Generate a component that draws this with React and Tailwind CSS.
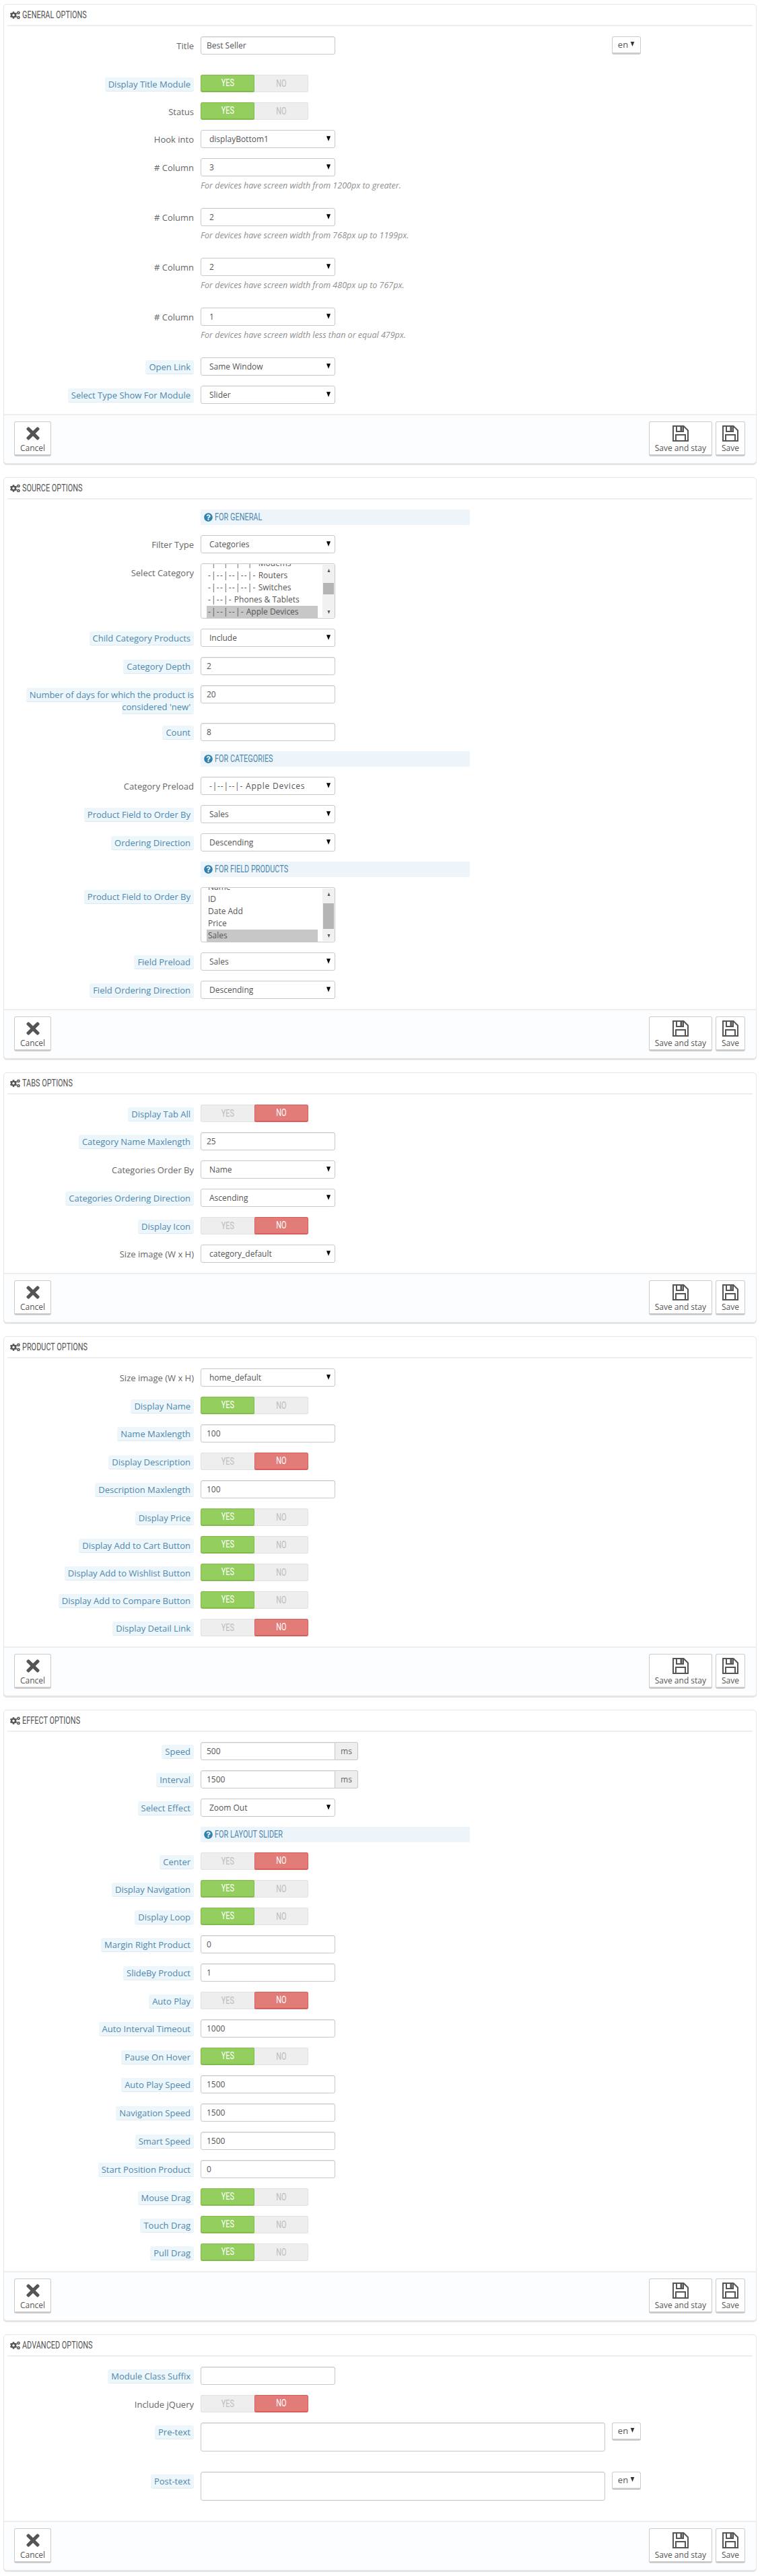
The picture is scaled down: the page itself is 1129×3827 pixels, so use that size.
import React from 'react';
import { FaCogs, FaQuestionCircle, FaTimes } from 'react-icons/fa';

const condensed = "inline-block font-['Roboto',sans-serif] scale-x-[0.78]";

const SaveIcon = () => (
  <svg viewBox="0 0 24 24" className="w-[24px] h-[24px] text-[#555]" fill="none" stroke="currentColor" strokeWidth="2">
    <path d="M1 1H16.5L23 7.5V23H1Z" />
    <path d="M6 1V9H16V1" />
    <rect x="11.5" y="2" width="3" height="6" fill="currentColor" stroke="none" />
    <path d="M5 23V14H19V23" />
  </svg>
);

const Arrow = ({ className }) => (
  <svg viewBox="0 0 8 10" className={className} fill="currentColor">
    <path d="M0 0H8L4 10Z" />
  </svg>
);

const Label = ({ text, tip }) => (
  <label className="w-[282px] shrink-0 pt-[5px] text-right text-[13px] leading-[18px] text-[#666]">
    {tip ? (
      <span className="px-[5px] py-[1px] bg-[#edf6fb] border-b border-[#dcebf3] rounded-[3px] text-[#4f88ad]">{text}</span>
    ) : (
      text
    )}
  </label>
);

const Row = ({ label, tip, children }) => (
  <div className="flex gap-[10px] mb-[15px]">
    <Label text={label} tip={tip} />
    <div className="min-w-0">{children}</div>
  </div>
);

const TextField = ({ value }) => (
  <input
    readOnly
    defaultValue={value}
    className="block w-[200px] h-[27px] px-[8px] bg-white border border-[#c8c8c8] rounded-[3px] text-[#555] shadow-[inset_0_1px_1px_rgba(0,0,0,0.08)]"
  />
);

const Addon = ({ value, unit }) => (
  <div className="flex w-[234px] h-[27px]">
    <input
      readOnly
      defaultValue={value}
      className="w-[200px] px-[8px] bg-white border border-[#c8c8c8] rounded-l-[3px] text-[#555] shadow-[inset_0_1px_1px_rgba(0,0,0,0.08)]"
    />
    <span className="flex-1 flex items-center justify-center bg-[#eee] border border-l-0 border-[#c8c8c8] rounded-r-[3px] text-[#666]">
      {unit}
    </span>
  </div>
);

const Select = ({ value, spaced }) => (
  <div className="relative w-[200px] h-[27px]">
    <select
      defaultValue={value}
      className={`w-full h-full pl-[12px] pr-[20px] pt-[1px] appearance-none bg-white border border-[#c8c8c8] rounded-[3px] text-[#555] ${spaced ? 'tracking-[0.8px]' : ''}`}
    >
      <option>{value}</option>
    </select>
    <Arrow className="absolute right-[7px] top-[9px] w-[6px] h-[8px] text-black pointer-events-none" />
  </div>
);

const ListItem = ({ prefix, name, active }) => (
  <div className={`h-[18px] shrink-0 pl-[2px] leading-[18px] whitespace-nowrap ${active ? 'bg-[#c7c7c7]' : ''}`}>
    {prefix && <span className="tracking-[1.2px] mr-[3px]">{prefix}</span>}
    {name}
  </div>
);

const ListBox = ({ items, thumbTop, thumbHeight }) => (
  <div className="flex w-[200px] h-[82px] bg-white border border-[#c8c8c8] rounded-[3px] text-[#555] overflow-hidden">
    <div className="w-[180px] pl-[8px] pr-[7px] flex flex-col justify-end overflow-hidden">
      {items.map((item) => (
        <ListItem key={item.name} {...item} />
      ))}
    </div>
    <div className="relative w-[18px] my-[1px] bg-[#f1f1f1]">
      <Arrow className="absolute left-[6px] top-[6px] w-[7px] h-[5px] rotate-180 text-[#555]" />
      <div
        className="absolute left-[1px] w-[16px] bg-[#b5b5b5]"
        style={{ top: thumbTop, height: thumbHeight }}
      />
      <Arrow className="absolute left-[6px] bottom-[5px] w-[7px] h-[5px] text-[#555]" />
    </div>
  </div>
);

const Toggle = ({ on }) => (
  <div className="flex w-[160px] h-[26px] bg-[#eee] rounded-[3px] shadow-[inset_0_0_0_1px_#e2e2e2] text-[#bdbdbd] text-[14px]">
    <div
      className={`w-[80px] h-full flex items-center justify-center rounded-l-[3px] ${
        on ? 'bg-[#93ce5e] border-x border-t border-b-2 border-[#7fbb47] text-white rounded-r-[2px]' : ''
      }`}
    >
      <span className={condensed}>YES</span>
    </div>
    <div
      className={`w-[80px] h-full flex items-center justify-center rounded-r-[3px] ${
        on ? '' : 'bg-[#e27c79] border-x border-t border-b-2 border-[#dc5c58] text-white rounded-l-[2px]'
      }`}
    >
      <span className={condensed}>NO</span>
    </div>
  </div>
);

const LangButton = () => (
  <button className="flex items-center justify-center gap-[3px] w-[43px] h-[27px] bg-white border border-[#ccc] border-b-[3px] rounded-[3px] text-[13px] text-[#555]">
    en
    <Arrow className="w-[7px] h-[7px] text-[#333] mb-[2px]" />
  </button>
);

const Lang = ({ children }) => (
  <div className="flex gap-[10px]">
    <div className="w-[601px]">{children}</div>
    <LangButton />
  </div>
);

const TextArea = () => (
  <textarea readOnly className="block w-[601px] h-[43px] bg-white border border-[#c8c8c8] rounded-[3px] resize-none shadow-[inset_0_1px_1px_rgba(0,0,0,0.08)]" />
);

const Help = ({ children }) => (
  <p className="mt-[5px] mb-[10px] h-[17px] leading-[17px] text-[12.5px] italic text-[#8f8f8f] whitespace-nowrap">{children}</p>
);

const Note = ({ children }) => (
  <div className="flex mb-[15px] ml-[292px] w-[400px] h-[23px] pl-[5px] items-center gap-[3px] bg-[#edf5fb] text-[#4f88ad] text-[14px]">
    <FaQuestionCircle size={13} className="shrink-0 text-[#2f83ad]" />
    <span className={`${condensed} origin-left whitespace-nowrap`}>{children}</span>
  </div>
);

const FooterButton = ({ icon, children }) => (
  <button className="flex flex-col items-center h-[52px] px-[8px] pt-[4px] bg-white border border-[#ccc] border-b-[3px] rounded-[3px] text-[#555] whitespace-nowrap">
    <span className="h-[26px] flex items-center">{icon}</span>
    <span className="leading-[17px]">{children}</span>
  </button>
);

const Panel = ({ title, children }) => (
  <section className="bg-white border border-[#e6e6e6] rounded-[5px] shadow-[0_2px_0_rgba(0,0,0,0.1)]">
    <div className="mx-[5px] h-[32px] flex items-center gap-[3px] pl-[4px] border-b-2 border-[#eee] text-[#555] text-[14px] mb-[15px] uppercase">
      <FaCogs size={15} />
      <span className={`${condensed} origin-left whitespace-nowrap`}>{title}</span>
    </div>
    {children}
    <div className="flex justify-between items-start h-[73px] pl-[15px] pr-[16px] pt-[9px] bg-[#fcfdfe] border-t-2 border-[#eee] rounded-b-[5px]">
      <FooterButton icon={<FaTimes size={28} className="text-[#555]" />}>Cancel</FooterButton>
      <div className="flex gap-[5px]">
        <FooterButton icon={<SaveIcon />}>Save and stay</FooterButton>
        <FooterButton icon={<SaveIcon />}>Save</FooterButton>
      </div>
    </div>
  </section>
);

const categories = [
  { prefix: '-|--|--|--|-', name: 'Modems' },
  { prefix: '-|--|--|--|-', name: 'Routers' },
  { prefix: '-|--|--|--|-', name: 'Switches' },
  { prefix: '-|--|-', name: 'Phones & Tablets' },
  { prefix: '-|--|--|-', name: 'Apple Devices', active: true },
];

const fields = [
  { name: 'Name' },
  { name: 'ID' },
  { name: 'Date Add' },
  { name: 'Price' },
  { name: 'Sales', active: true },
];

export default function App() {
  return (
    <div className="flex flex-col gap-[20px] pt-[6px] pb-[10px] px-[5px] bg-white text-[12px] font-['Open_Sans',sans-serif]">
      <Panel title="General options">
        <div className="flex gap-[10px] mb-[30px]">
          <Label text="Title" />
          <Lang><TextField value="Best Seller" /></Lang>
        </div>
        <Row label="Display Title Module" tip><Toggle on /></Row>
        <Row label="Status"><Toggle on /></Row>
        <Row label="Hook into"><Select value="displayBottom1" /></Row>
        <Row label="# Column">
          <Select value="3" />
          <Help>For devices have screen width from 1200px to greater.</Help>
        </Row>
        <Row label="# Column">
          <Select value="2" />
          <Help>For devices have screen width from 768px up to 1199px.</Help>
        </Row>
        <Row label="# Column">
          <Select value="2" />
          <Help>For devices have screen width from 480px up to 767px.</Help>
        </Row>
        <Row label="# Column">
          <Select value="1" />
          <Help>For devices have screen width less than or equal 479px.</Help>
        </Row>
        <Row label="Open Link" tip><Select value="Same Window" /></Row>
        <Row label="Select Type Show For Module" tip><Select value="Slider" /></Row>
      </Panel>

      <Panel title="Source options">
        <Note>FOR GENERAL</Note>
        <Row label="Filter Type"><Select value="Categories" /></Row>
        <Row label="Select Category">
          <ListBox items={categories} thumbTop={27} thumbHeight={17} />
        </Row>
        <Row label="Child Category Products" tip><Select value="Include" /></Row>
        <Row label="Category Depth" tip><TextField value="2" /></Row>
        <Row label="Number of days for which the product is considered 'new'" tip><TextField value="20" /></Row>
        <Row label="Count" tip><TextField value="8" /></Row>
        <Note>FOR CATEGORIES</Note>
        <Row label="Category Preload"><Select value="-|--|--|- Apple Devices" spaced /></Row>
        <Row label="Product Field to Order By" tip><Select value="Sales" /></Row>
        <Row label="Ordering Direction" tip><Select value="Descending" /></Row>
        <Note>FOR FIELD PRODUCTS</Note>
        <Row label="Product Field to Order By" tip>
          <ListBox items={fields} thumbTop={22} thumbHeight={38} />
        </Row>
        <Row label="Field Preload" tip><Select value="Sales" /></Row>
        <Row label="Field Ordering Direction" tip><Select value="Descending" /></Row>
      </Panel>

      <Panel title="Tabs options">
        <Row label="Display Tab All" tip><Toggle /></Row>
        <Row label="Category Name Maxlength" tip><TextField value="25" /></Row>
        <Row label="Categories Order By"><Select value="Name" /></Row>
        <Row label="Categories Ordering Direction" tip><Select value="Ascending" /></Row>
        <Row label="Display Icon" tip><Toggle /></Row>
        <Row label="Size image (W x H)"><Select value="category_default" /></Row>
      </Panel>

      <Panel title="Product options">
        <Row label="Size image (W x H)"><Select value="home_default" /></Row>
        <Row label="Display Name" tip><Toggle on /></Row>
        <Row label="Name Maxlength" tip><TextField value="100" /></Row>
        <Row label="Display Description" tip><Toggle /></Row>
        <Row label="Description Maxlength" tip><TextField value="100" /></Row>
        <Row label="Display Price" tip><Toggle on /></Row>
        <Row label="Display Add to Cart Button" tip><Toggle on /></Row>
        <Row label="Display Add to Wishlist Button" tip><Toggle on /></Row>
        <Row label="Display Add to Compare Button" tip><Toggle on /></Row>
        <Row label="Display Detail Link" tip><Toggle /></Row>
      </Panel>

      <Panel title="Effect options">
        <Row label="Speed" tip><Addon value="500" unit="ms" /></Row>
        <Row label="Interval" tip><Addon value="1500" unit="ms" /></Row>
        <Row label="Select Effect" tip><Select value="Zoom Out" /></Row>
        <Note>FOR LAYOUT SLIDER</Note>
        <Row label="Center" tip><Toggle /></Row>
        <Row label="Display Navigation" tip><Toggle on /></Row>
        <Row label="Display Loop" tip><Toggle on /></Row>
        <Row label="Margin Right Product" tip><TextField value="0" /></Row>
        <Row label="SlideBy Product" tip><TextField value="1" /></Row>
        <Row label="Auto Play" tip><Toggle /></Row>
        <Row label="Auto Interval Timeout" tip><TextField value="1000" /></Row>
        <Row label="Pause On Hover" tip><Toggle on /></Row>
        <Row label="Auto Play Speed" tip><TextField value="1500" /></Row>
        <Row label="Navigation Speed" tip><TextField value="1500" /></Row>
        <Row label="Smart Speed" tip><TextField value="1500" /></Row>
        <Row label="Start Position Product" tip><TextField value="0" /></Row>
        <Row label="Mouse Drag" tip><Toggle on /></Row>
        <Row label="Touch Drag" tip><Toggle on /></Row>
        <Row label="Pull Drag" tip><Toggle on /></Row>
      </Panel>

      <Panel title="Advanced options">
        <Row label="Module Class Suffix" tip><TextField value="" /></Row>
        <Row label="Include jQuery"><Toggle /></Row>
        <div className="flex gap-[10px] mb-[30px]">
          <Label text="Pre-text" tip />
          <Lang><TextArea /></Lang>
        </div>
        <div className="flex gap-[10px] mb-[30px]">
          <Label text="Post-text" tip />
          <Lang><TextArea /></Lang>
        </div>
      </Panel>
    </div>
  );
}
